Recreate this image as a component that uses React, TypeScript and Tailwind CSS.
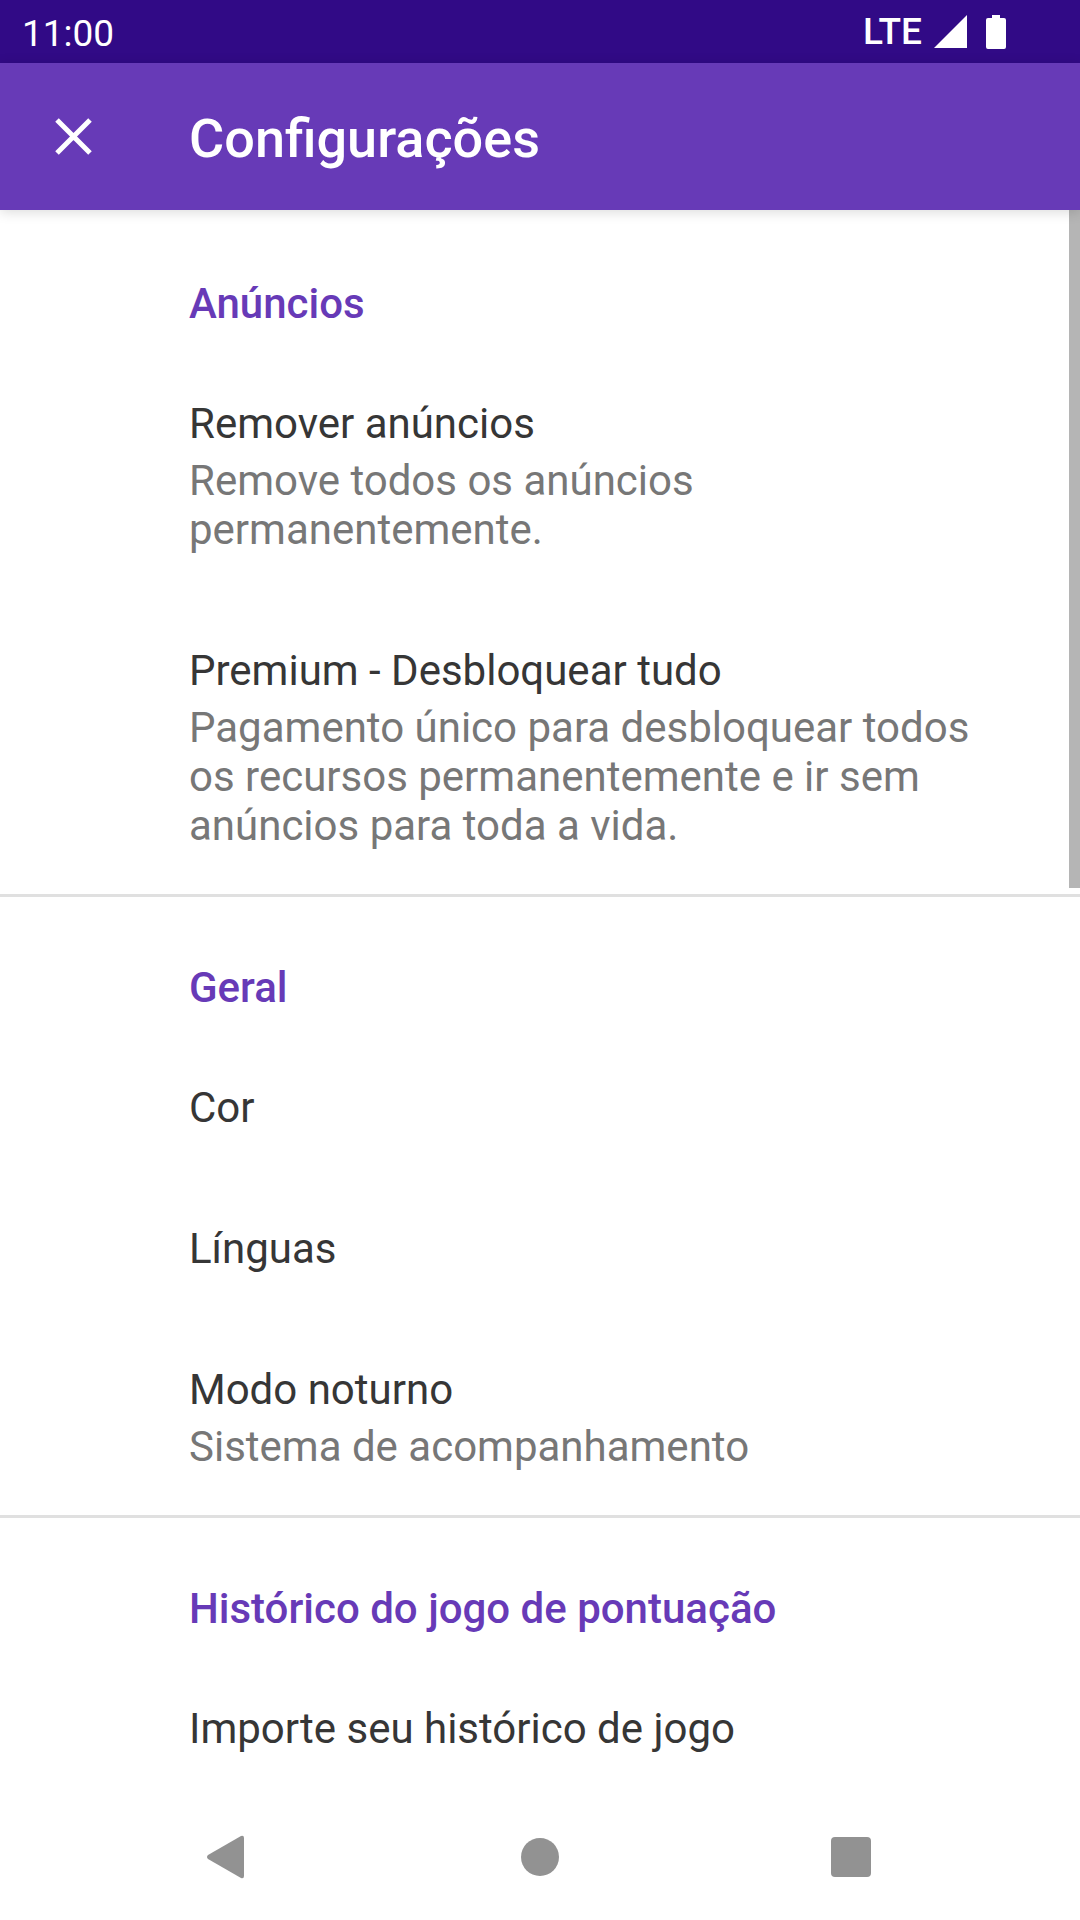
type Item = { title: string; summary?: string };
type Section = { heading: string; items: Item[] };

const SECTIONS: Section[] = [
  {
    heading: "Anúncios",
    items: [
      {
        title: "Remover anúncios",
        summary: "Remove todos os anúncios permanentemente.",
      },
      {
        title: "Premium - Desbloquear tudo",
        summary:
          "Pagamento único para desbloquear todos os recursos permanentemente e ir sem anúncios para toda a vida.",
      },
    ],
  },
  {
    heading: "Geral",
    items: [
      { title: "Cor" },
      { title: "Línguas" },
      { title: "Modo noturno", summary: "Sistema de acompanhamento" },
    ],
  },
  {
    heading: "Histórico do jogo de pontuação",
    items: [{ title: "Importe seu histórico de jogo" }],
  },
];

function StatusBar() {
  return (
    <div className="flex h-[63px] items-center justify-between bg-[#310a86] pr-[74px] pl-[22px] text-white">
      <span className="pt-1 text-[37px] leading-[44px]">11:00</span>
      <div className="flex items-center">
        <span className="text-[37px] leading-[44px] font-medium">LTE</span>
        <svg className="ml-3 h-[33px] w-[33px]" viewBox="0 0 33 33" fill="currentColor" aria-hidden>
          <path d="M0 33 33 0v33z" />
        </svg>
        <svg className="ml-[19px] h-[34px] w-5" viewBox="0 0 20 34" fill="currentColor" aria-hidden>
          <path d="M6 0h8v3h4a2 2 0 0 1 2 2v27a2 2 0 0 1-2 2H2a2 2 0 0 1-2-2V5a2 2 0 0 1 2-2h4z" />
        </svg>
      </div>
    </div>
  );
}

function AppBar() {
  return (
    <header className="relative z-10 flex h-[147px] items-center bg-[#673ab7] text-white shadow-[0_2px_12px_rgba(0,0,0,0.15)]">
      <button type="button" aria-label="Fechar" className="flex h-full w-[147px] items-center justify-center">
        <svg className="h-[37px] w-[37px]" viewBox="0 0 37 37" stroke="currentColor" strokeWidth="5" aria-hidden>
          <path d="M2 2 35 35M35 2 2 35" />
        </svg>
      </button>
      <h1 className="ml-[42px] pt-1 text-[54px] leading-[62px] font-medium">Configurações</h1>
    </header>
  );
}

function SettingsItem({ title, summary }: Item) {
  return (
    <button type="button" className="block w-full pt-12 pr-[84px] pb-11 pl-[189px] text-left text-[42px] leading-[49px]">
      <span className="block text-[#363636]">{title}</span>
      {summary && <span className="mt-2 block text-[#777777]">{summary}</span>}
    </button>
  );
}

function NavBar() {
  return (
    <nav className="flex h-[126px] shrink-0 items-center justify-between bg-white pr-[209px] pl-[206px] text-[#929292]">
      <button type="button" aria-label="Voltar">
        <svg className="h-11 w-[43px]" viewBox="0 0 43 44" fill="currentColor" aria-hidden>
          <path d="M2 20 35 1q3-1 3 2v38q0 3-3 2L2 24q-2-2 0-4z" />
        </svg>
      </button>
      <button type="button" aria-label="Início">
        <svg className="h-10 w-10" viewBox="0 0 40 40" fill="currentColor" aria-hidden>
          <circle cx="20" cy="20" r="19" />
        </svg>
      </button>
      <button type="button" aria-label="Recentes">
        <svg className="h-10 w-10" viewBox="0 0 40 40" fill="currentColor" aria-hidden>
          <rect width="40" height="40" rx="4" />
        </svg>
      </button>
    </nav>
  );
}

export default function App() {
  return (
    <div className="flex h-screen flex-col overflow-hidden bg-white font-['Roboto',sans-serif]">
      <StatusBar />
      <AppBar />
      <main className="relative min-h-0 flex-1 overflow-hidden">
        {SECTIONS.map((section) => (
          <section key={section.heading} className="border-t-3 border-[#e0e0e0] pt-[60px] first:border-transparent">
            <h2 className="pr-[84px] pb-[17px] pl-[189px] text-[42px] leading-[61px] font-medium text-[#673ab7]">
              {section.heading}
            </h2>
            {section.items.map((item) => (
              <SettingsItem key={item.title} {...item} />
            ))}
          </section>
        ))}
        {/* scroll thumb */}
        <div className="absolute top-0 right-0 h-[678px] w-[11px] bg-[#b5b5b5]" />
      </main>
      <NavBar />
    </div>
  );
}
